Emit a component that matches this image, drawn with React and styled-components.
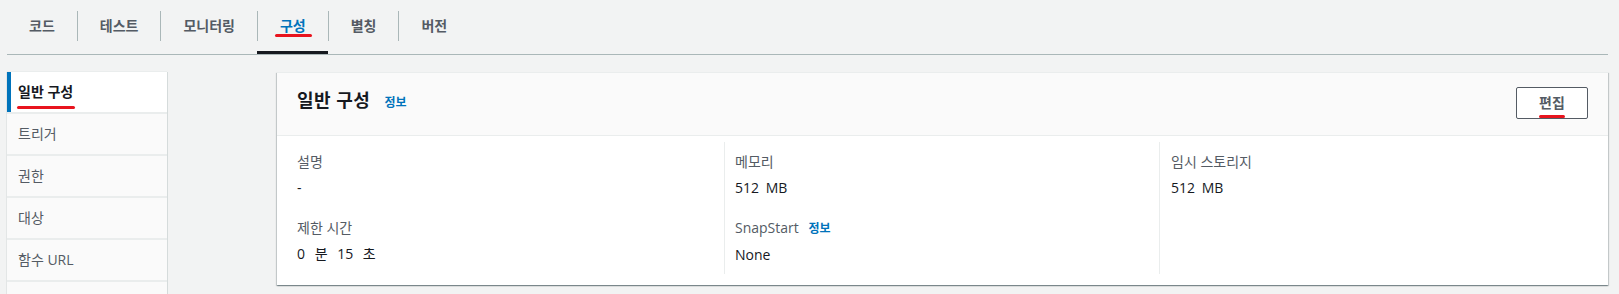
import React from "react"
import styled, { createGlobalStyle } from "styled-components"

const GlobalStyle = createGlobalStyle`
  html, body {
    margin: 0;
    padding: 0;
    background: #f2f3f3;
  }
  body {
    font-family: "Open Sans", "Noto Sans CJK KR", sans-serif;
    font-size: 14px;
    color: #16191f;
  }
`

const TabData = ["코드", "테스트", "모니터링", "구성", "별칭", "버전"]
const MenuData = ["일반 구성", "트리거", "권한", "대상", "함수 URL", ""]

const App = () => {
  return (
    <Page>
      <GlobalStyle />
      <TabList>
        {TabData.map((title, index) => (
          <Tab key={title} active={title === "구성"}>
            <TabLabel first={index === 0} active={title === "구성"}>
              {title}
              {title === "구성" ? <Mark style={{ left: -5, right: -6, bottom: 4 }} /> : null}
            </TabLabel>
          </Tab>
        ))}
      </TabList>

      <Main>
        <Sidebar>
          {MenuData.map((title, index) => (
            <MenuItem key={index} active={index === 0}>
              <MenuText>
                {title}
                {index === 0 ? <Mark style={{ left: -1, right: -2, bottom: -7 }} /> : null}
              </MenuText>
            </MenuItem>
          ))}
        </Sidebar>

        <Card>
          <CardHeader>
            <Title>
              일반 구성 <InfoLink>정보</InfoLink>
            </Title>
            <EditButton>
              <ButtonText>
                편집
                <Mark style={{ left: 0, right: 0, bottom: -5 }} />
              </ButtonText>
            </EditButton>
          </CardHeader>

          <CardBody>
            <Column>
              <Field>
                <Label>설명</Label>
                <Value>-</Value>
              </Field>
              <Field>
                <Label>제한 시간</Label>
                <Value spaced>0 분 15 초</Value>
              </Field>
            </Column>
            <Column divider>
              <Field>
                <Label>메모리</Label>
                <Value>512 MB</Value>
              </Field>
              <Field>
                <Label>SnapStart <InfoLink small>정보</InfoLink></Label>
                <Value>None</Value>
              </Field>
            </Column>
            <Column divider wide>
              <Field>
                <Label>임시 스토리지</Label>
                <Value>512 MB</Value>
              </Field>
            </Column>
          </CardBody>
        </Card>
      </Main>
    </Page>
  )
}

export default App

const Page = styled.div`
  padding: 0 11px 0 7px;
  height: 294px;
  overflow: hidden;
`

const TabList = styled.div`
  display: flex;
  border-bottom: 1px solid #aab7b8;
`

const Tab = styled.div`
  box-sizing: border-box;
  height: 54px;
  padding-top: 11px;
  border-bottom: 3px solid ${p => (p.active ? "#16191f" : "transparent")};
`

const TabLabel = styled.span`
  position: relative;
  display: block;
  padding: 0 22px;
  height: 30px;
  line-height: 29px;
  font-weight: 700;
  font-size: 14px;
  color: ${p => (p.active ? "#0073bb" : "#545b64")};
  border-left: 1px solid ${p => (p.first ? "transparent" : "#aab7b8")};
  margin-left: ${p => (p.first ? "-1px" : "0")};
`

const Mark = styled.span`
  position: absolute;
  height: 3px;
  border-radius: 2px;
  background: #e8141e;
  margin: 0 22px;
`

const Main = styled.div`
  display: flex;
  align-items: flex-start;
  margin-top: 17px;
`

const Sidebar = styled.div`
  width: 160px;
  flex-shrink: 0;
  display: flex;
  flex-direction: column;
  gap: 2px;
  background: #eaeded;
  box-shadow: 1px 0 0 0 #d5dbdb, -1px 0 0 0 #e3e6e6, 0 -1px 0 0 #eaeded;
`

const MenuItem = styled.div`
  box-sizing: border-box;
  height: 40px;
  display: flex;
  align-items: center;
  padding-left: 7px;
  border-left: 4px solid ${p => (p.active ? "#0073bb" : "#fafafa")};
  background: ${p => (p.active ? "#ffffff" : "#fafafa")};
  color: ${p => (p.active ? "#16191f" : "#545b64")};
  font-weight: ${p => (p.active ? 700 : 400)};
  font-size: 14px;
`

const MenuText = styled.span`
  position: relative;
  line-height: 20px;

  ${Mark} {
    margin: 0;
  }
`

const Card = styled.div`
  flex: 1;
  margin-left: 110px;
  background: #ffffff;
  border-top: 1px solid #eaeded;
  box-shadow: 0 1px 1px 0 rgba(0, 28, 36, 0.3), 1px 1px 1px 0 rgba(0, 28, 36, 0.15),
    -1px 1px 1px 0 rgba(0, 28, 36, 0.15);
`

const CardHeader = styled.div`
  display: flex;
  align-items: center;
  justify-content: space-between;
  padding: 14px 20px 16px 20px;
  background: #fafafa;
  border-bottom: 1px solid #eaeded;
`

const Title = styled.h2`
  margin: 0 0 3px 0;
  font-size: 18px;
  font-weight: 700;
  line-height: 26px;
  color: #16191f;
  display: flex;
  align-items: baseline;
  gap: 4px;
  letter-spacing: 0.5px;
`

const InfoLink = styled.span`
  margin-left: ${p => (p.small ? "6px" : "10px")};
  font-size: 12px;
  font-weight: 700;
  color: #0073bb;
  letter-spacing: 0;
`

const EditButton = styled.button`
  box-sizing: border-box;
  width: 72px;
  height: 32px;
  border: 1px solid #545b64;
  border-radius: 2px;
  background: #ffffff;
  font-family: inherit;
  font-size: 14px;
  font-weight: 700;
  color: #545b64;
  display: flex;
  align-items: center;
  justify-content: center;
  padding: 0;
`

const ButtonText = styled.span`
  position: relative;
  line-height: 20px;

  ${Mark} {
    margin: 0;
  }
`

const CardBody = styled.div`
  display: grid;
  grid-template-columns: 427px 435px 1fr;
  padding: 6px 20px 11px 20px;
`

const Column = styled.div`
  padding: 9px 0 8px ${p => (p.divider ? (p.wide ? "11px" : "10px") : "0")};
  border-left: ${p => (p.divider ? "1px solid #eaeded" : "none")};
  display: flex;
  flex-direction: column;
  gap: 18px;
`

const Field = styled.div`
  display: flex;
  flex-direction: column;
  gap: 4px;
`

const Label = styled.div`
  line-height: 22px;
  font-size: 14px;
  color: #545b64;
`

const Value = styled.div`
  line-height: 22px;
  font-size: 14px;
  color: #16191f;
  white-space: pre;
  word-spacing: ${p => (p.spaced ? "6px" : "3px")};
`
